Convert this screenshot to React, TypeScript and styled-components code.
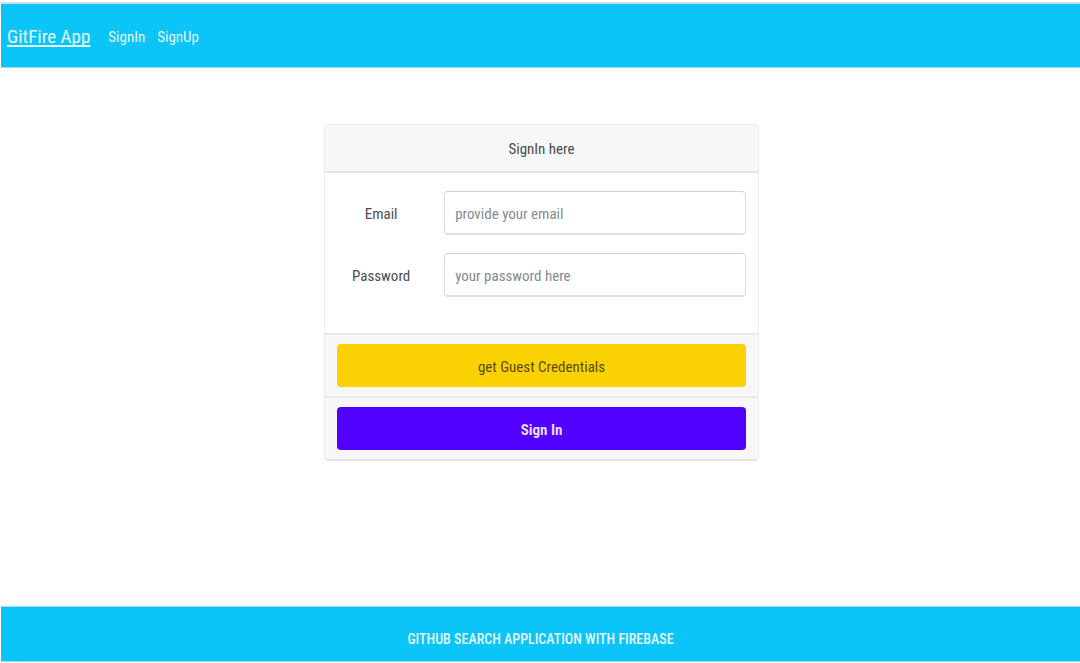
import React from "react";
import styled, { createGlobalStyle } from "styled-components";

const GlobalStyle = createGlobalStyle`
  *, *::before, *::after { box-sizing: border-box; }
  body {
    margin: 0;
    background: #fff;
    color: #4c4c4c;
    font-family: "Roboto Condensed", Roboto, "Open Sans", sans-serif;
    font-size: 15px;
    line-height: 26px;
  }
`;

const Page = styled.div`
  min-height: 100vh;
  display: flex;
  flex-direction: column;
  padding: 2px 0 1px 1px;
`;

const Navbar = styled.nav`
  display: flex;
  align-items: center;
  gap: 18px;
  height: 66px;
  padding: 2px 6px 0;
  background: #0bc5f8;
  border-top: 2px solid #cfdde2;
  border-bottom: 1px solid #8fdff7;
`;

const Brand = styled.a`
  color: #e4f8ff;
  font-size: 19px;
  line-height: 30px;
  text-decoration: underline;
  text-decoration-thickness: 2px;
  text-underline-offset: 2px;
  text-decoration-skip-ink: none;
`;

const NavList = styled.ul`
  display: flex;
  gap: 12px;
  margin: 0;
  padding: 0;
  list-style: none;
`;

const NavLink = styled.a`
  color: #e4f8ff;
  text-decoration: none;
`;

const Main = styled.main`
  flex: 1;
  display: flex;
  justify-content: center;
  align-items: flex-start;
  padding: 56px 0 24px 2px;
`;

const Column = styled.div`
  width: calc(100% * 5 / 12);
  min-width: 340px;
  padding: 0 7px;
`;

const Card = styled.form`
  border: 1px solid #ededed;
  border-bottom: 2px solid #e6e6e6;
  border-radius: 4px;
  background: #fff;
`;

const CardHeader = styled.h1`
  margin: 0;
  padding: 11px 13px 9px;
  background: #f7f7f7;
  border-bottom: 2px solid #e6e6e6;
  font-size: 15px;
  font-weight: 400;
  line-height: 26px;
  text-align: center;
`;

const CardBody = styled.div`
  display: flex;
  flex-direction: column;
  gap: 18px;
  padding: 18px 12px 36px;
`;

const Field = styled.div`
  display: grid;
  grid-template-columns: 88px 1fr;
  column-gap: 19px;
  align-items: center;
`;

const Label = styled.label`
  padding-top: 2px;
  text-align: center;
`;

const Input = styled.input`
  width: 100%;
  height: 44px;
  padding: 2px 10px 0;
  border: 1px solid #d9dde3;
  border-top-color: #cbd0da;
  border-bottom: 2px solid #dde1e6;
  border-radius: 4px;
  background: #fff;
  color: #4c4c4c;
  font: inherit;

  &::placeholder {
    color: #858a92;
    opacity: 1;
  }
`;

const CardFooter = styled.div`
  padding: 9px 12px;
  background: #f7f7f7;
  border-top: 2px solid #e9e9e9;
`;

const Button = styled.button<{ $primary?: boolean }>`
  display: block;
  width: 100%;
  height: 43px;
  padding: 2px 0 0;
  border: 0;
  border-radius: 4px;
  background: ${(p) => (p.$primary ? "#5200ff" : "#fad102")};
  color: ${(p) => (p.$primary ? "#e6defc" : "#5b4c00")};
  font: inherit;
  font-weight: ${(p) => (p.$primary ? 700 : 400)};
  cursor: pointer;
`;

const Footer = styled.footer`
  padding: 19px 12px 9px;
  background: #0bc5f8;
  border-top: 1px solid #a5d9ea;
  border-bottom: 1px solid #8fdff7;
  color: #e4f8ff;
  font-size: 14px;
  font-weight: 500;
  text-align: center;
  text-transform: uppercase;
`;

export default function App() {
  return (
    <Page>
      <GlobalStyle />
      <Navbar>
        <Brand href="#home">GitFire App</Brand>
        <NavList>
          <li><NavLink href="#signin">SignIn</NavLink></li>
          <li><NavLink href="#signup">SignUp</NavLink></li>
        </NavList>
      </Navbar>
      <Main>
        <Column>
          <Card onSubmit={(e) => e.preventDefault()}>
            <CardHeader>SignIn here</CardHeader>
            <CardBody>
              <Field>
                <Label htmlFor="email">Email</Label>
                <Input id="email" type="email" placeholder="provide your email" />
              </Field>
              <Field>
                <Label htmlFor="password">Password</Label>
                <Input id="password" type="password" placeholder="your password here" />
              </Field>
            </CardBody>
            <CardFooter>
              <Button type="button">get Guest Credentials</Button>
            </CardFooter>
            <CardFooter>
              <Button type="submit" $primary>Sign In</Button>
            </CardFooter>
          </Card>
        </Column>
      </Main>
      <Footer>GitHub Search Application with Firebase</Footer>
    </Page>
  );
}
